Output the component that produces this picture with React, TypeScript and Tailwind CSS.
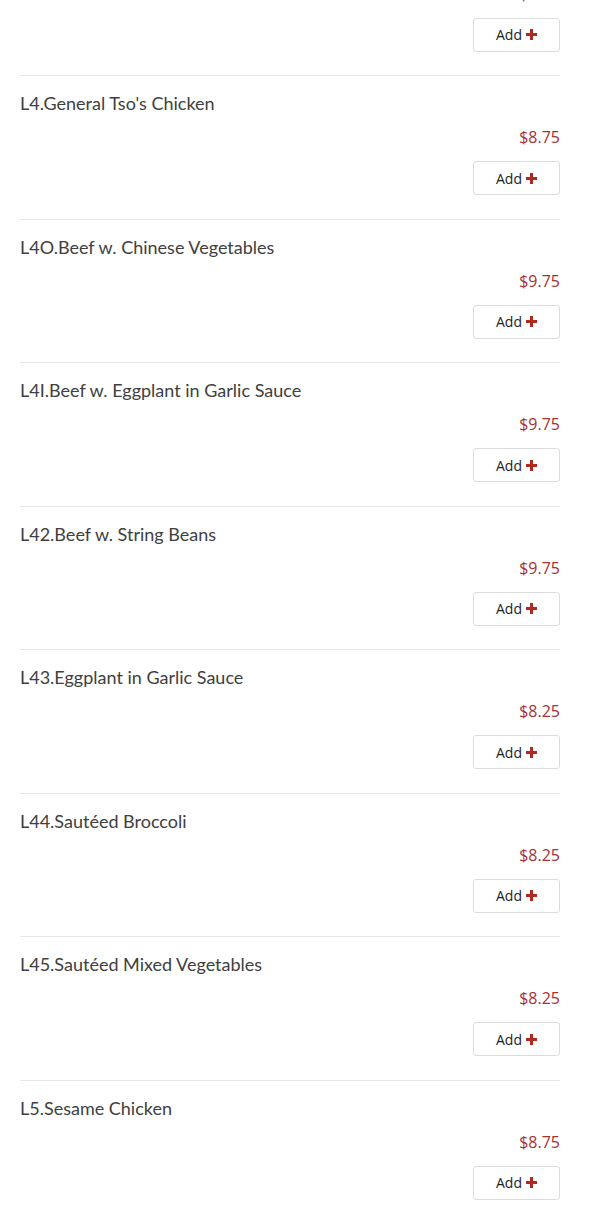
import React from "react";

const items = [
  { name: "L39.Beef w. Broccoli", price: "$9.75" },
  { name: "L4.General Tso's Chicken", price: "$8.75" },
  { name: "L4O.Beef w. Chinese Vegetables", price: "$9.75" },
  { name: "L4I.Beef w. Eggplant in Garlic Sauce", price: "$9.75" },
  { name: "L42.Beef w. String Beans", price: "$9.75" },
  { name: "L43.Eggplant in Garlic Sauce", price: "$8.25" },
  { name: "L44.Sautéed Broccoli", price: "$8.25" },
  { name: "L45.Sautéed Mixed Vegetables", price: "$8.25" },
  { name: "L5.Sesame Chicken", price: "$8.75" },
];

function Plus() {
  return (
    <svg width="11" height="11" viewBox="0 0 11 11" className="ml-[4px]">
      <rect x="4" y="0" width="3" height="11" fill="#b02a20" />
      <rect x="0" y="4" width="11" height="3" fill="#b02a20" />
    </svg>
  );
}

export default function App() {
  return (
    <div className="bg-white w-[590px] h-[1216px] overflow-hidden">
      <div className="ml-5 w-[540px] mt-[-68.5px]">
        {items.map((it, i) => (
          <div key={i} className="border-t border-[#e6e6e6] pt-[14px] pb-[23.5px]">
            <div
              className="text-[18px] leading-[27px] text-[#404040]"
              style={{ fontFamily: "Lato, 'Open Sans', sans-serif" }}
            >
              {it.name}
            </div>
            <div
              className="mt-2 text-right text-[16px] leading-[24px] text-[#a83030]"
              style={{ fontFamily: "'Open Sans', sans-serif" }}
            >
              {it.price}
            </div>
            <div className="mt-3 flex justify-end">
              <button
                className="w-[87px] h-[34px] border border-[#dcdcdc] rounded-[3px] bg-white flex items-center justify-center text-[14px] text-[#222]"
                style={{ fontFamily: "'Open Sans', sans-serif" }}
              >
                Add
                <Plus />
              </button>
            </div>
          </div>
        ))}
      </div>
    </div>
  );
}
